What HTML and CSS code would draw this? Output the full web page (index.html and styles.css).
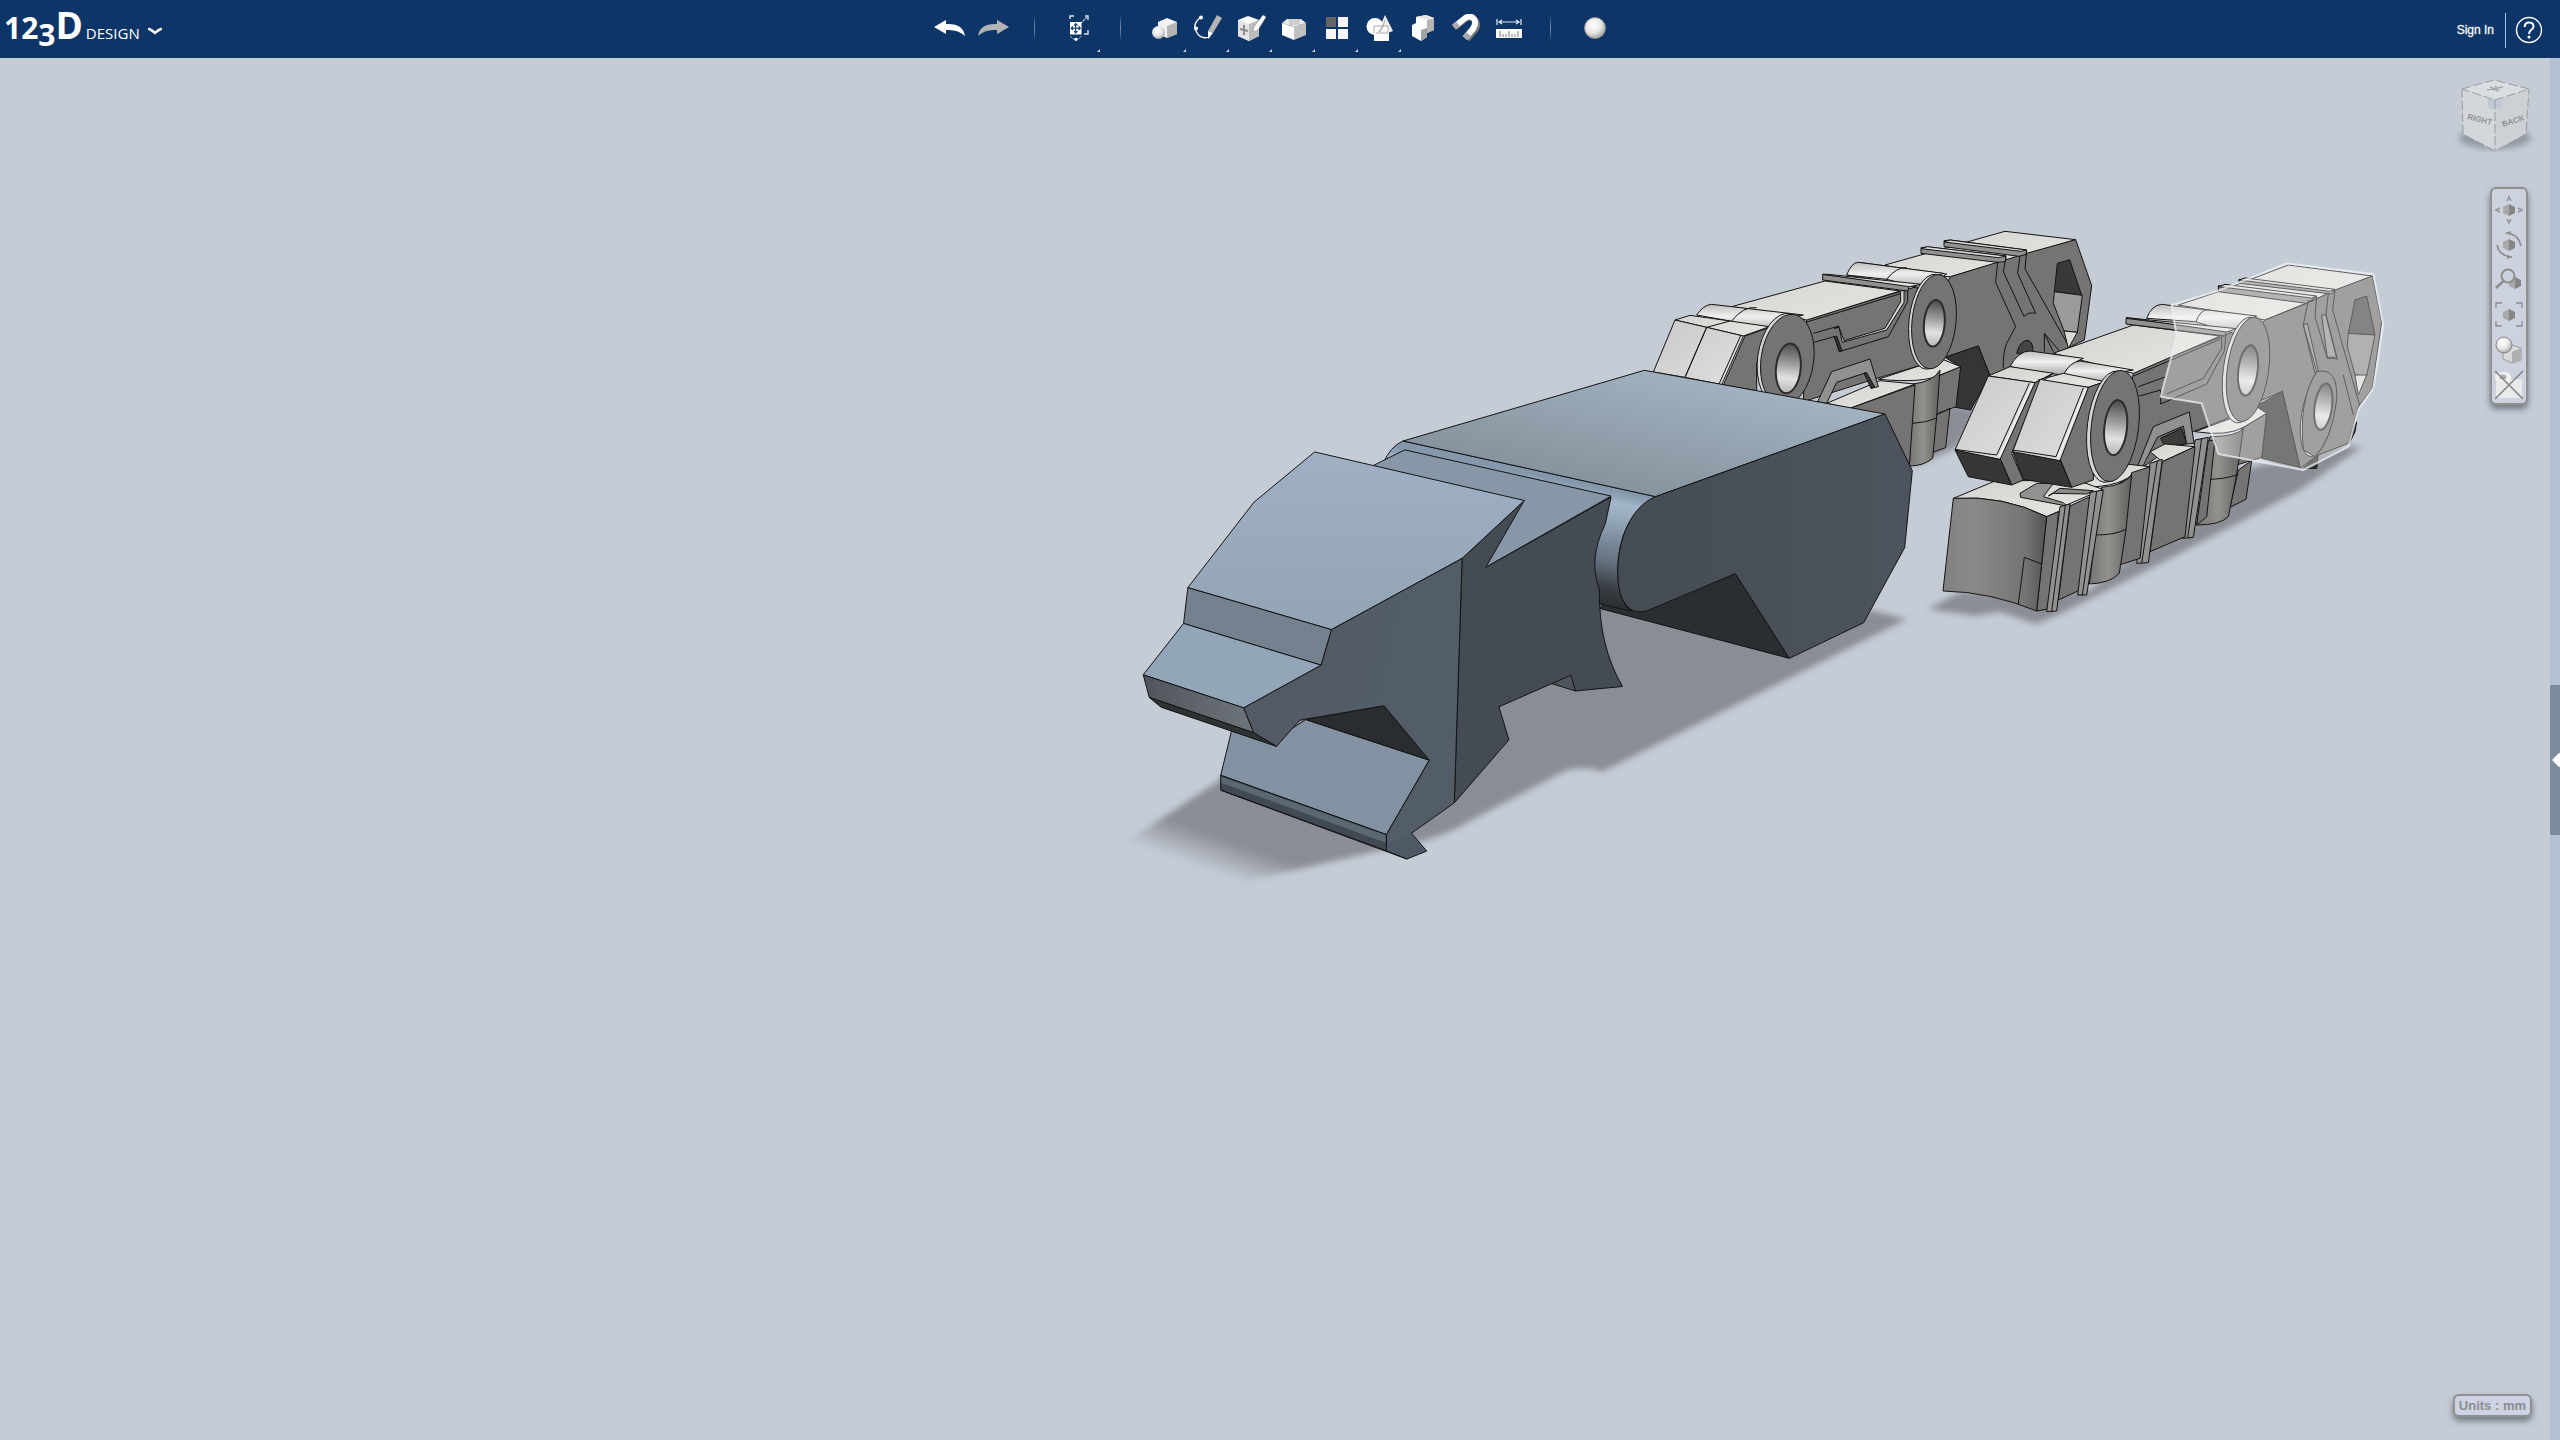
FILE: index.html
```html
<!DOCTYPE html>
<html lang="en">
<head>
<meta charset="utf-8">
<title>123D Design</title>
<link rel="stylesheet" href="styles.css">
</head>
<body>
<header class="topbar">
  <button class="brand" aria-label="123D Design menu">
    <span class="brand-name"><span class="brand-digits">12<span class="brand-drop">3</span></span>D</span>
    <span class="brand-product">DESIGN</span>
    <svg class="chevron" width="14" height="8" viewBox="0 0 14 8"><path d="M1 2Q4 3 7 6Q10 3 13 2" fill="none" stroke="#fff" stroke-width="2.4" stroke-linecap="round"/></svg>
  </button>
  <nav class="tools" aria-label="Tools">
    <button class="tool" aria-label="Undo"><svg viewBox="0 0 32 28"><path d="M0 13L12 6V10Q29 9 31 22Q24 15 12 16V20Z" fill="#fff"/></svg></button>
    <button class="tool" aria-label="Redo"><svg viewBox="0 0 32 28"><path d="M32 13L20 6V10Q3 9 1 22Q8 15 20 16V20Z" fill="#b3b3b3"/></svg></button>
    <i class="sep"></i>
    <button class="tool more" aria-label="Transform"><svg viewBox="0 0 32 28"><path d="M7 5V2H11M22 2H25V6M25 16V20H21" fill="none" stroke="#dbe3ec" stroke-width="1.4"/><path d="M18 9L24 3" stroke="#dbe3ec" stroke-width="1.3" stroke-dasharray="2 1"/><rect x="7" y="8" width="11.500" height="12.500" fill="#fff"/><path d="M12.700 10V19M8.500 14.300H17M11 11.500L12.700 9.500L14.500 11.500M11 17L12.700 19L14.500 17M10 12.500L8.200 14.300L10 16M15.500 12.500L17.300 14.300L15.500 16" fill="none" stroke="#0d3567" stroke-width="1.100"/><path d="M7 22Q12 29 19 22" fill="none" stroke="#8da2bd"/><circle cx="13" cy="25.300" r="1.600" fill="#fff"/></svg></button>
    <i class="sep"></i>
    <button class="tool more" aria-label="Primitives"><svg viewBox="0 0 32 28"><path d="M18 4L28 8V20L18 24L9 20V8Z" fill="#f2f2f2"/><path d="M28 8L18 12V24L28 20Z" fill="#b4b4b4"/><circle cx="9.500" cy="18.500" r="6.500" fill="url(#ball)"/></svg></button>
    <button class="tool more" aria-label="Sketch"><svg viewBox="0 0 32 28"><path d="M9 3Q0 10 4 17Q8 26 18 23" fill="none" stroke="#fff" stroke-width="1.300"/><circle cx="9" cy="3.500" r="2" fill="#fff"/><circle cx="4" cy="14.500" r="2" fill="#fff"/><path d="M25 1L30 4L21 19L16 17Z" fill="#b5b5b5"/><path d="M16 17L21 19L16 25Z" fill="#fff"/></svg></button>
    <button class="tool more" aria-label="Construct"><svg viewBox="0 0 32 28"><path d="M13 2L24 6V22L14 27L3 22V6Z" fill="#fff"/><path d="M3 6L14 10V27L3 22Z" fill="#e4e4e4"/><path d="M24 6L14 10V27L24 22Z" fill="#bcbcbc"/><path d="M9 11V21M5 15L13 17" stroke="#8c8c8c" stroke-width="2"/><path d="M28 1L31 3L23 16L18 18L19 13Z" fill="#fff" stroke="#999" stroke-width=".6"/></svg></button>
    <button class="tool more" aria-label="Modify"><svg viewBox="0 0 32 28"><path d="M4 9L16 13V26L4 21Z" fill="#fff"/><path d="M28 9L16 13V26L28 21Z" fill="#c0c0c0"/><path d="M4 9L9 5H23L28 9L22 11Q20 12 16 13Q12 11 10 11Z" fill="#e8e8e8"/><path d="M9 5H23Q21 7 22 11H11Q12 7 9 5Z" fill="#cfcfcf"/></svg></button>
    <button class="tool more" aria-label="Pattern"><svg viewBox="0 0 32 28"><rect x="5" y="3" width="10" height="10" fill="#666"/><path d="M17 3H27V13H17ZM5 15H15V25H5ZM17 15H27V25H17Z" fill="#f6f6f8"/></svg></button>
    <button class="tool more" aria-label="Grouping"><svg viewBox="0 0 32 28"><circle cx="11" cy="12.500" r="8.500" fill="#fff"/><path d="M21 1L29 17Q21 21 14 17Z" fill="#eee"/><path d="M10 13H25V27H10Z" fill="#fff"/><path d="M10 19V12H24V19H12M14 18Q18 18 19 12M21 6Q20 12 15 17" fill="none" stroke="#aaa"/></svg></button>
    <button class="tool" aria-label="Combine"><svg viewBox="0 0 32 28"><path d="M5 11L9 9V3L19 1L27 4V16L20 19V23L14 27L5 22Z" fill="#fff"/><path d="M27 4V16L20 19V6Z" fill="#b5b5b5"/><path d="M20 14V23L14 27V16Z" fill="#a2a2a2"/><path d="M9 3L19 1L27 4L19 6Z" fill="#e6e6e6"/></svg></button>
    <button class="tool" aria-label="Snap"><svg viewBox="0 0 32 28"><path d="M5 13L15 5Q21 1 25 6Q29 11 24 17L17 25" fill="none" stroke="#777" stroke-width="6.500"/><path d="M4 13L14 5Q20 0 24 5Q27 10 22 16L15 24" fill="none" stroke="#fff" stroke-width="6"/><path d="M4 13L8 9.800M18.500 20L15 24" stroke="#aaa" stroke-width="6"/></svg></button>
    <button class="tool" aria-label="Measure"><svg viewBox="0 0 32 28"><path d="M4 5V11M28 5V11M6 8H26M9 6L6 8L9 10M23 6L26 8L23 10" fill="none" stroke="#e8eef4" stroke-width="1.200"/><rect x="3" y="15" width="26" height="9" fill="#fff"/><path d="M7 23V17M10 23V20M13 23V20M16 23V17M19 23V20M22 23V20M25 23V17" stroke="#777"/></svg></button>
    <i class="sep"></i>
    <button class="tool" aria-label="Material"><svg viewBox="0 0 32 28"><circle cx="16" cy="14" r="10.500" fill="url(#ball)" stroke="#8b8b8b"/></svg></button>
  </nav>
  <div class="account">
    <a class="signin" href="#signin">Sign In</a>
    <button class="help" aria-label="Help"><svg width="28" height="28" viewBox="0 0 28 28"><circle cx="14" cy="14" r="12.500" fill="none" stroke="#fff" stroke-width="1.400"/><path d="M9.700 11Q9.700 6.500 14 6.500Q18.500 6.500 18.500 10.500Q18.500 12.500 16 14Q14 15.500 14 18" fill="none" stroke="#fff" stroke-width="2"/><circle cx="14" cy="21" r="1.500" fill="#fff"/></svg></button>
  </div>
</header>

<main class="workspace">
  <section class="canvas" aria-label="3D view">
    <svg class="scene" viewBox="0 58 2550 1382" preserveAspectRatio="xMidYMid slice">
      <defs>
        <radialGradient id="ball" cx=".4" cy=".35" r=".65"><stop offset="0" stop-color="#fff"/><stop offset=".6" stop-color="#e6e6e6"/><stop offset="1" stop-color="#a8a8a8"/></radialGradient>
        <linearGradient id="fade" gradientUnits="userSpaceOnUse" x1="1182" y1="862" x2="1194" y2="828"><stop offset="0" stop-color="#8a8d95" stop-opacity="0"/><stop offset="1" stop-color="#8a8d95"/></linearGradient>
        <linearGradient id="head" x1="0" y1="0" x2="0" y2="1"><stop offset="0" stop-color="#9fb0c5"/><stop offset="1" stop-color="#93a4b5"/></linearGradient>
        <linearGradient id="cheek" x1="0" y1="0" x2="1" y2=".3"><stop offset=".3" stop-color="#545966"/><stop offset=".7" stop-color="#525d67"/></linearGradient>
        <linearGradient id="snout" x1="0" y1="0" x2="1" y2="0"><stop offset="0" stop-color="#50555b"/><stop offset="1" stop-color="#6e757b"/></linearGradient>
        <linearGradient id="palmTop" x1=".2" y1="1" x2=".9" y2=".2"><stop offset=".2" stop-color="#87949f"/><stop offset="1" stop-color="#a4b4c3"/></linearGradient>
        <linearGradient id="palmSide" x1="0" y1="0" x2="1" y2="0"><stop offset="0" stop-color="#454c54"/><stop offset="1" stop-color="#4d545d"/></linearGradient>
        <linearGradient id="roll" gradientUnits="userSpaceOnUse" x1="200" y1="430" x2="130" y2="780"><stop offset="0" stop-color="#8597aa"/><stop offset=".1" stop-color="#a3b6ca"/><stop offset=".25" stop-color="#92a5b9"/><stop offset=".6" stop-color="#64707d"/><stop offset=".8" stop-color="#3b4046"/><stop offset="1" stop-color="#25282b"/></linearGradient>
        <linearGradient id="lit" x1="0" y1="0" x2="1" y2="1"><stop offset="0" stop-color="#d3d3cf"/><stop offset="1" stop-color="#e6e6e2"/></linearGradient>
        <linearGradient id="tube" x1="0" y1="0" x2="0" y2="1"><stop offset="0" stop-color="#bdbdbb"/><stop offset=".45" stop-color="#f0f0ef"/><stop offset="1" stop-color="#a9a9a7"/></linearGradient>
        <linearGradient id="post" x1="0" y1="0" x2="1" y2="0"><stop offset="0" stop-color="#747371"/><stop offset=".45" stop-color="#93928f"/><stop offset="1" stop-color="#605f5d"/></linearGradient>
        <linearGradient id="bore" x1="0" y1="0" x2="0" y2="1"><stop offset="0" stop-color="#4b4b4b"/><stop offset=".4" stop-color="#9c9c9c"/><stop offset=".7" stop-color="#e2e2e2"/><stop offset="1" stop-color="#b5b5b5"/></linearGradient>
        <linearGradient id="tip" x1="0" y1="0" x2="1" y2="1"><stop offset="0" stop-color="#c9c9c8"/><stop offset="1" stop-color="#dedfdf"/></linearGradient>
        <linearGradient id="curve" x1="0" y1="0" x2="1" y2="0"><stop offset="0" stop-color="#82817f"/><stop offset=".3" stop-color="#8b8a88"/><stop offset=".8" stop-color="#757472"/><stop offset="1" stop-color="#535251"/></linearGradient>
        <filter id="soft" x="-10%" y="-10%" width="120%" height="120%"><feGaussianBlur stdDeviation="3"/></filter>
      </defs>

      <!-- ground shadows -->
      <g filter="url(#soft)">
        <path fill="url(#fade)" d="M1220 780L1126 842L1234 884L1386 849Q1440 840 1470 821L1565 771Q1585 765 1602 772L1780 683L1907 619L1870 610L1700 560H1480Z"/>
        <path fill="#8a8d95" d="M1912 468L1950 405L1990 410L1955 448Z"/>
        <path fill="#8a8d95" d="M1928 609L1960 592L2090 590L2240 470L2345 446L2362 447L2300 490L2240 522L2140 574L2060 614L2036 624L2000 612L1975 616Z"/>
      </g>

      <!-- rear finger -->
      <svg class="part" x="1640" y="220" width="480" height="270" viewBox="0 0 1440 810">
        <path class="lit" d="M735 135L1095 34L1307 59L932 170L840 170Z"/>
        <path class="side" d="M932 170L1160 100L1307 59L1355 197L1333 360L1250 400L1050 467L1015 378L915 412L850 300Z"/>
        <path class="mid" d="M912 62L930 60L1160 90L1158 103L1138 109L912 80ZM843 83L862 81L1098 108L1096 125L1073 127L843 100Z"/>
        <path class="lit" d="M862 80L1098 108L1075 113L843 86ZM930 60L1160 90L1142 94L912 66Z"/>
        <path class="line" d="M1073 125L1067 187L1127 320L1100 370Q1088 400 1090 445M1098 110L1090 155L1152 290Q1165 275 1187 280L1133 160L1140 107M1160 93L1155 147L1290 385M1213 395V340L1240 395M1213 340L1260 395"/>
        <path fill="#393939" d="M1252 130L1289 119L1325 226L1243 215Z"/>
        <path fill="#9c9b99" d="M1243 215L1327 226L1312 337L1272 333L1240 250Z"/>
        <path class="lit" d="M1272 333L1312 337L1285 385Z"/>
        <path fill="#444" d="M1130 400Q1140 360 1165 361Q1182 370 1178 400Z"/>
        <path fill="#353535" d="M915 412L1015 378L1050 467L992 570L945 562L960 440Z"/>
        <path class="side" d="M880 590L930 565L917 683L870 700ZM890 470L962 440L948 560L888 582Z"/>
        <path class="lit" d="M715 478L830 440L905 417L962 440L900 465Q850 490 715 478Z"/>
        <path fill="url(#post)" d="M820 492Q880 485 900 450L890 590L878 715Q850 738 808 738Z"/>
        <path class="line" d="M818 610Q860 608 890 594"/>
        <path class="side" d="M500 298L780 215L845 195V435L720 472L490 545Z"/>
        <path class="lit" d="M560 550L720 482L825 492L630 565Z"/>
        <path class="side" d="M630 565L825 495L808 738L735 585Z"/>
        <path class="lit" d="M275 260L555 183L780 213L500 300L420 280ZM620 165L655 127L920 162L850 210L800 195Z"/>
        <path fill="url(#tube)" d="M620 165Q635 127 655 127L910 160Q870 170 845 205L740 178Z"/>
        <path class="line" d="M740 178Q770 140 800 143"/>
        <path class="mid" d="M548 163L808 197L803 213L548 180Z"/>
        <path class="lit" d="M548 163H565L845 193L808 200Z"/>
        <path fill="#d9d9d6" d="M782 213L792 211V247L740 330L607 367L597 320L582 325L597 322L612 362L735 325L782 245Z"/>
        <path class="line" d="M803 213V245L745 350L598 395L583 350L522 367M520 340L597 318M500 306L782 221"/>
        <path class="mid" d="M533 545L575 455L690 417L715 500L693 505L678 458L590 487L560 550Z"/>
        <path class="dark" d="M672 460L680 458L704 501L693 505ZM583 350L590 348L606 392L598 395Z"/>
        <ellipse class="rim" cx="872" cy="305" rx="65" ry="143" transform="rotate(6 872 305)"/>
        <ellipse class="side" cx="882" cy="305" rx="66" ry="142" transform="rotate(6 882 305)"/>
        <ellipse class="bore" cx="883" cy="310" rx="31" ry="70" transform="rotate(5 883 310)"/>
        <path fill="url(#tube)" d="M170 285Q190 255 215 253L490 285Q430 290 400 335L270 303Z"/>
        <path class="line" d="M275 303Q310 258 350 263"/>
        <path class="lit" d="M105 300L150 286L270 303L388 320L310 348L200 322Z"/>
        <path fill="url(#tip)" d="M105 300L200 322L135 472L40 456ZM200 322L310 348L245 494L135 472Z"/>
        <path class="side" d="M315 348L390 322L350 430V512L250 495Z"/>
        <path class="line" d="M200 322L270 303M302 347L237 492"/>
        <ellipse class="rim" cx="430" cy="417" rx="77" ry="138" transform="rotate(8 430 417)"/>
        <ellipse class="side" cx="442" cy="420" rx="79" ry="138" transform="rotate(8 442 420)"/>
        <ellipse class="bore" cx="445" cy="445" rx="37" ry="75" transform="rotate(6 445 445)"/>
      </svg>

      <!-- front finger -->
      <svg class="part" x="1920" y="250" width="480" height="390" viewBox="0 0 1440 1170">
        <path class="dark" d="M1280 580L1310 515L1305 545L1288 580ZM1150 655L1195 610L1190 655Z"/>
        <path class="lit" d="M775 165L895 125L1105 45L1357 78L1035 210L930 190Z"/>
        <path class="side" d="M1035 210L1160 160L1245 120L1357 78L1385 215L1357 415L1315 470L1285 580L1195 615L1140 655L1087 424L1000 462L950 300Z"/>
        <path class="mid" d="M957 88L1245 120L1235 132L957 100ZM895 107L1190 140L1160 160L895 125Z"/>
        <path class="lit" d="M975 84L1245 118L1230 124L957 90ZM915 103L1190 138L1175 144L895 110Z"/>
        <path class="mid" d="M1150 225L1162 220L1195 362L1185 370ZM1205 195H1218L1250 325L1222 325Z"/>
        <path class="line" d="M1165 150L1150 225L1190 365Q1145 440 1142 560M1190 140L1185 200L1222 325Q1235 315 1252 328L1218 195L1225 130M1245 120L1238 180L1320 470M1270 375L1300 495"/>
        <path fill="#4b4b4b" d="M1305 150L1340 138L1365 255L1285 250Z"/>
        <path fill="#8d8c8a" d="M1285 250L1365 255L1340 378L1305 375L1282 290Z"/>
        <path class="lit" d="M1305 375H1340L1315 435Z"/>
        <ellipse class="rim" cx="1192" cy="495" rx="47" ry="126" transform="rotate(10 1192 495)"/>
        <path class="side" d="M1190 365Q1255 350 1250 450Q1235 570 1185 620L1150 600Q1135 450 1190 365Z"/>
        <ellipse class="bore" cx="1210" cy="470" rx="26" ry="70" transform="rotate(8 1210 470)"/>
        <path fill="#353535" d="M1005 470L1087 424L1140 652L1025 625L1040 490Z"/>
        <path class="side" d="M955 660L995 632L978 748L930 772ZM965 535L1040 490L1025 622L950 645Z"/>
        <path class="lit" d="M825 545L960 495L1010 470L1040 490L970 532Q920 560 825 545Z"/>
        <path fill="url(#post)" d="M870 560Q950 560 970 535L950 675L925 800Q900 825 830 825Z"/>
        <path class="line" d="M860 688Q915 688 952 674"/>
        <path class="side" d="M640 365L900 262L950 240L960 490L820 545L600 700Z"/>
        <path class="lit" d="M400 310L640 225L900 258L640 370L480 330Z"/>
        <path fill="url(#tube)" d="M680 205Q695 165 725 163L1010 198Q960 215 940 250L825 215Z"/>
        <path class="line" d="M828 215Q840 180 865 178"/>
        <path class="mid" d="M618 205L920 242L915 258L618 222Z"/>
        <path class="lit" d="M618 203L640 205L950 236L920 246Z"/>
        <path class="line" d="M640 378L900 268M655 410L738 380M722 462V420L658 438M740 432L850 385L905 295V262M722 462L860 402L912 305L918 256"/>
        <path class="mid" d="M640 680L700 530L808 486L822 580L800 582L790 528L712 562L668 650Z"/>
        <path fill="#3c3c3b" d="M722 565L785 535L800 582L735 590Z"/>
        <ellipse class="rim" cx="972" cy="360" rx="62" ry="160" transform="rotate(8 972 360)"/>
        <ellipse class="side" cx="984" cy="358" rx="62" ry="158" transform="rotate(8 984 358)"/>
        <ellipse class="bore" cx="984" cy="361" rx="29" ry="76" transform="rotate(7 984 361)"/>

        <path class="lit" d="M690 605L735 582L825 590L727 635Z"/>
        <path class="side" d="M865 572L885 570L860 800L830 825Z"/>
        <path class="mid" d="M825 570L865 562L820 862L787 865Z"/>
        <path class="side" d="M727 635L825 590L795 860L690 905Z"/>
        <path class="mid" d="M690 640L727 628L685 938L650 940Z"/>
        <path class="line" d="M712 632L665 940M845 565L803 864"/>
        <path class="lit" d="M460 700L600 640L690 650L635 675Q590 715 460 712Z"/>
        <path class="side" d="M635 668L690 650L660 925L598 945Z"/>
        <path fill="url(#post)" d="M545 712Q620 705 635 672L618 840L598 970Q570 1000 508 1002Z"/>
        <path class="line" d="M528 855Q585 855 618 838"/>
        <path class="lit" d="M100 745L225 693L470 690L548 718L440 765L415 785L380 800Q250 735 100 745Z"/>
        <path class="mid" d="M300 730L350 700H400L370 740L430 758L440 768L302 742Z"/>
        <path fill="#8a8987" d="M385 738L420 715L520 722L500 732L400 730Z"/>
        <path class="side" d="M380 800L415 785L395 1075L350 1083ZM450 768L510 740L480 1020L415 1050Z"/>
        <path class="mid" d="M420 770L450 762L410 1083L380 1085ZM510 727L550 720L500 1035L473 1035Z"/>
        <path class="line" d="M436 766L395 1085M530 724L487 1036"/>
        <path fill="url(#curve)" d="M100 745Q250 735 380 800L350 1083Q210 1025 69 1023Z"/>
        <path class="line" d="M295 1062L313 922L365 942"/>

        <path fill="url(#tube)" d="M270 350Q295 303 330 303L490 325Q450 340 430 375L340 365Z"/>
        <path fill="url(#tube)" d="M430 375Q450 335 480 333L640 360Q580 365 550 400L480 385Z"/>
        <path class="lit" d="M205 378L270 350L400 370L345 398ZM355 390L430 370L555 395L505 412Z"/>
        <path class="side" d="M345 398L400 370L360 400L275 610L310 690L275 705L240 625Z"/>
        <path class="dark" d="M105 600L240 625L275 705L145 680Z"/>
        <path fill="url(#tip)" d="M205 378L345 398L240 628L105 600Z"/>
        <path class="side" d="M505 412L555 395L520 500V690L455 712L420 625Z"/>
        <path class="dark" d="M278 605L420 630L455 712L310 688Z"/>
        <path fill="url(#tip)" d="M360 388L505 412L420 632L278 605Z"/>
        <path class="edge" d="M337 402L238 620M498 416L414 624"/>
        <path class="line" d="M328 400L230 615L105 598M490 414L408 620L278 600"/>
        <ellipse class="rim" cx="572" cy="530" rx="70" ry="168" transform="rotate(7 572 530)"/>
        <ellipse class="side" cx="585" cy="528" rx="71" ry="168" transform="rotate(7 585 528)"/>
        <ellipse class="bore" cx="587" cy="533" rx="34" ry="83" transform="rotate(6 587 533)"/>

        <!-- hovered segment -->
        <path class="hover" d="M755 165L895 122L1100 40L1360 72L1390 225L1360 415L1315 480L1285 590L1150 660L895 612L845 460L722 440L770 260Z"/>
      </svg>

      <!-- palm block -->
      <svg class="part" x="1560" y="350" width="380" height="340" viewBox="0 0 1140 1020">
        <path fill="#2a2d31" d="M118 775L688 925L526 671L240 787L150 740Z"/>
        <path fill="url(#roll)" d="M-530 340Q-510 290 -471 273L287 440Q175 500 173 665Q176 760 215 783L118 762L90 700V560L-400 420Z"/>
        <path fill="url(#palmTop)" d="M-471 273L253 61L975 192L287 440Z"/>
        <path fill="url(#palmSide)" d="M287 440C210 470 173 575 173 665C173 750 205 800 262 782L526 671L688 925L911 818L1034 593L1057 362L975 192Z"/>
      </svg>

      <!-- head block -->
      <svg class="part" x="1120" y="360" width="560" height="540" viewBox="0 0 1568 1568" preserveAspectRatio="none">
        <path fill="#8797a8" d="M710 306L797 261L1375 395L1024 602L958 576Z"/>
        <path fill="#4f565b" d="M1210 940L1275 961L1263 905Z"/>
        <path fill="#444b53" d="M958 576L1132 408L1024 602L1375 398L1359 475Q1310 580 1342 665Q1340 830 1407 948L1275 961L1263 915L1061 1007L1089 1103L936 1286Z"/>
        <path fill="url(#head)" d="M545 267L1132 408L958 576L592 783L190 661L375 413Z"/>
        <path fill="#8292a2" d="M312 1078L282 1206L746 1378L866 1162L520 1044L438 1100Z"/>
        <path fill="#2a2d30" d="M520 1044L739 1004L866 1162Z"/>
        <path fill="#414a52" d="M282 1206L746 1378V1425L282 1249Z"/>
        <path class="flat" fill="#5b6772" d="M284 1210L744 1380V1402L284 1228Z"/>
        <path fill="url(#cheek)" d="M958 576L936 1286L816 1374L859 1426L803 1449L746 1425V1378L866 1162L739 1004L503 1046L438 1122L374 1082L346 1010L563 886L592 783Z"/>
        <path class="flat" fill="#4f5865" d="M750 1402L820 1384L856 1425L803 1446L750 1423Z"/>
        <path fill="#74828f" d="M190 661L592 783L563 886L178 765Z"/>
        <path fill="#93a5b8" d="M178 765L563 886L346 1010L65 914Z"/>
        <path fill="url(#snout)" d="M65 914L346 1010L374 1082L82 980Z"/>
        <path fill="#303234" d="M82 980L374 1082L438 1122L115 1008Z"/>
        <path class="line" d="M282 1249L803 1449"/>
      </svg>
    </svg>

    <svg class="viewcube" width="84" height="88" viewBox="0 0 84 88" role="img" aria-label="View cube">
      <ellipse cx="43" cy="68" rx="36" ry="11" fill="#7d838c" opacity=".7" filter="url(#soft)"/>
      <path d="M10 19L43 30V81L11 64Z" fill="#d3d6db"/>
      <path d="M43 30L77 19L74 64L43 81Z" fill="#cdd0d5"/>
      <path d="M10 19L42 10L77 19L43 30Z" fill="#dadde1"/>
      <path d="M36 28L43 30L50 28V38L43 40L36 38Z" fill="#c0c9d5"/>
      <path d="M10 19L42 10L77 19L43 30ZM10 19L11 64L43 81L74 64L77 19M43 30V81" fill="none" stroke="#9a9da1" stroke-dasharray="9 3"/>
      <path d="M35 20L51 17M38 17L47 21M44 16L42 21" stroke="#a4a7ab" stroke-width="1.500"/>
      <text x="15" y="49" transform="rotate(14 15 49)">RIGHT</text>
      <text x="51" y="57" transform="rotate(-18 51 57)">BACK</text>
    </svg>

    <div class="navbar" role="toolbar" aria-label="Navigation">
      <button class="nav" aria-label="Pan"><svg viewBox="0 0 30 30"><use href="#hex"/><path d="M13 6L15 2L17 6M13 24L15 28L17 24M6 13L2 15L6 17M24 13L28 15L24 17" fill="none" stroke="#929292" stroke-width="1.500"/></svg></button>
      <button class="nav" aria-label="Orbit"><svg viewBox="0 0 30 30"><use href="#hex"/><path d="M12 3Q25 4 27 16M18 27Q5 26 3 15" fill="none" stroke="#8c8c8c" stroke-width="1.500"/><path d="M11 3L17 1V5ZM19 27L13 25V29Z" fill="#8c8c8c"/></svg></button>
      <button class="nav" aria-label="Zoom"><svg viewBox="0 0 30 30"><use href="#hex" x="6" y="3"/><circle cx="14" cy="11" r="6.500" fill="#ccd3dd" fill-opacity=".7" stroke="#8c8c8c" stroke-width="2"/><path d="M9.500 16L2 23" stroke="#8c8c8c" stroke-width="2.400"/></svg></button>
      <button class="nav" aria-label="Fit"><svg viewBox="0 0 30 30"><use href="#hex"/><path d="M2 8V3H8M22 3H28V8M28 21V26H22M8 26H2V21" fill="none" stroke="#8c8c8c" stroke-width="1.300"/></svg></button>
      <button class="nav" aria-label="Display style"><svg viewBox="0 0 30 30"><path d="M9 14L18 10L27 13V25L18 28L9 24Z" fill="#d8d9db" stroke="#999"/><path d="M18 17L27 13V25L18 28Z" fill="#aeb0b1"/><circle cx="10" cy="10" r="8" fill="url(#ball)" stroke="#888"/></svg></button>
      <button class="nav" aria-label="Hide sketches"><svg viewBox="0 0 30 30"><path d="M2 9H28V28H2Z" fill="#e9eaec"/><ellipse cx="9" cy="7" rx="8" ry="5" fill="#f2f2f3"/><ellipse cx="9" cy="7" rx="3.500" ry="2.500" fill="#aaa"/><path d="M1 1L29 29M29 1L1 29" stroke="#858585" stroke-width="1.600"/></svg></button>
    </div>
    <svg class="defs" width="0" height="0"><defs><g id="hex"><path d="M9 12L15 9V21L9 18Z" fill="#a9a9a9"/><path d="M15 9L21 12V18L15 21Z" fill="#868686"/></g></defs></svg>

    <button class="units">Units : mm</button>
  </section>
  <aside class="drawer">
    <button class="drawer-handle" aria-label="Open panel"><svg width="8" height="14" viewBox="0 0 8 14"><path d="M0 7L7 0H8V14H7Z" fill="#fff"/></svg></button>
  </aside>
</main>
</body>
</html>
```
FILE: styles.css
```css
* { box-sizing: border-box; }
html, body { height: 100%; }
body {
  margin: 0;
  display: flex;
  flex-direction: column;
  overflow: hidden;
  background: #c5ccd6;
  font-family: "Liberation Sans", Arial, sans-serif;
}
button {
  margin: 0;
  padding: 0;
  border: 0;
  background: none;
  color: inherit;
  font: inherit;
  cursor: pointer;
}

.topbar {
  display: grid;
  grid-template-columns: 1fr auto 1fr;
  align-items: stretch;
  height: 58px;
  flex: none;
  background: #0d3567;
  color: #fff;
}
.brand {
  display: flex;
  align-items: baseline;
  justify-self: start;
  gap: 3px;
  padding: 0 0 0 4px;
  font-family: "Open Sans", "Noto Sans", sans-serif;
}
.brand-name { font-size: 37px; line-height: 50px; font-weight: 700; }
.brand-digits { font-size: 30px; }
.brand-drop { vertical-align: -7px; line-height: 1; }
.brand-product { font-size: 15px; }
.chevron { margin: 4px 0 0 5px; align-self: center; }

.tools { display: flex; padding-right: 16px; }
.tool {
  position: relative;
  width: 43px;
  display: flex;
  justify-content: center;
  padding-top: 14px;
}
.tool svg { width: 32px; height: 28px; }
.more::after {
  content: "";
  position: absolute;
  right: 0;
  bottom: 6px;
  border-left: 3px solid transparent;
  border-bottom: 3px solid #d5d9de;
}
.sep {
  width: 1px;
  height: 28px;
  margin: 14px 22px 0 20px;
  background: linear-gradient(transparent, #7c8fa8, transparent);
}

.account {
  display: flex;
  justify-self: end;
  align-items: center;
  padding: 2px 17px 0 0;
}
.signin {
  padding-right: 11px;
  font-size: 12px;
  color: #fff;
  text-decoration: none;
  -webkit-text-stroke: 1px rgba(255, 255, 255, .3);
}
.help {
  display: flex;
  align-items: center;
  height: 35px;
  padding-left: 9px;
  border-left: 1px solid #9cc8ee;
}

.workspace { flex: 1; display: flex; min-height: 0; }
.canvas { position: relative; flex: 1; min-width: 0; background: #c5ccd6; }
.scene { display: block; width: 100%; height: 100%; }
.part { overflow: visible; }
.part path, .part ellipse {
  stroke: #141414;
  stroke-width: 1px;
  stroke-linejoin: round;
  vector-effect: non-scaling-stroke;
}
.part .flat { stroke: none; }
.part .lit { fill: url(#lit); }
.part .side { fill: #757472; }
.part .mid { fill: #92918f; }
.part .dark { fill: #363636; }
.part .rim { fill: #d6d6d4; }
.part .bore { fill: url(#bore); stroke: #2b2b2b; stroke-width: 2px; }
.part .line { fill: none; }
.part .edge { fill: none; stroke: #efefee; stroke-width: 2px; }
.part .hover { fill: rgba(255, 255, 255, .32); stroke: rgba(235, 240, 245, .75); stroke-width: 2px; }

.viewcube { position: absolute; top: 12px; right: 14px; overflow: visible; }
.viewcube text { font: bold 8px "Liberation Sans", Arial, sans-serif; fill: #8f9296; }

.navbar {
  position: absolute;
  top: 129px;
  right: 22px;
  width: 38px;
  display: flex;
  flex-direction: column;
  align-items: center;
  padding: 3px 0 1px;
  border: 2px solid #8e918f;
  border-radius: 6px;
  background: #ccd3df;
  box-shadow: 0 4px 6px rgba(60, 66, 76, .6);
}
.nav { height: 35px; }
.nav svg { display: block; width: 30px; height: 30px; }
.defs { position: absolute; }

.units {
  position: absolute;
  right: 18px;
  bottom: 23px;
  height: 23px;
  padding: 0 4px;
  border: 2px solid #8e918f;
  border-radius: 6px;
  background: #cdd3e2;
  box-shadow: 0 4px 6px rgba(60, 66, 76, .6);
  font-size: 13px;
  line-height: 17px;
  font-weight: 700;
  color: #8b8d91;
}

.drawer {
  width: 10px;
  display: flex;
  align-items: center;
  padding-top: 22px;
  background: #b2c0d2;
}
.drawer-handle {
  width: 10px;
  height: 150px;
  display: flex;
  align-items: center;
  justify-content: flex-end;
  background: #7a8b9c;
}
```
